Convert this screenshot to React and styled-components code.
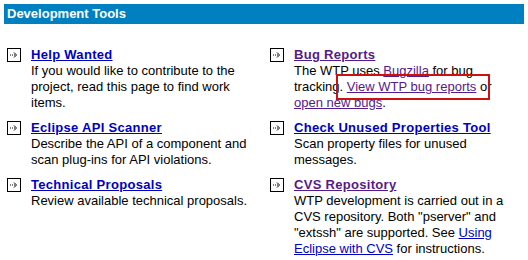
import React from "react";
import styled, { createGlobalStyle } from "styled-components";

const Global = createGlobalStyle`
  html, body { margin: 0; padding: 0; background: #ffffff; }
  body { font-family: "Liberation Sans", Arial, sans-serif; }
`;

const Page = styled.div`
  width: 528px;
  height: 260px;
  box-sizing: border-box;
  padding: 4px;
  background: #fff;
`;

const Header = styled.div`
  height: 20px;
  background: #0080c0;
  color: #fff;
  font-weight: bold;
  font-size: 13px;
  line-height: 20px;
  padding-left: 3px;
`;

const Grid = styled.div`
  display: grid;
  grid-template-columns: 263px 1fr;
  row-gap: 9px;
  margin-top: 23px;
  padding-left: 3px;
`;

const Item = styled.div`
  display: flex;
  align-items: flex-start;
  gap: 10px;
`;

const IconBox = styled.svg`
  flex: none;
  width: 14px;
  height: 14px;
  margin-top: 1px;
`;

const Body = styled.div`
  font-size: 13px;
  line-height: 16px;
  color: #000;
  white-space: nowrap;
`;

const Title = styled.a`
  display: inline-block;
  font-weight: bold;
  letter-spacing: 0.3px;
  color: ${(p) => (p.$visited ? "#551a8b" : "#0000c0")};
  text-decoration: underline;
`;

const Link = styled.a`
  color: ${(p) => (p.$visited ? "#551a8b" : "#0000c0")};
  text-decoration: underline;
`;

const Marked = styled.span`
  position: relative;
  &::after {
    content: "";
    position: absolute;
    left: -11px;
    right: -14px;
    top: -5px;
    bottom: -6px;
    border: 2px solid #cc1111;
    pointer-events: none;
  }
`;

const Arrow = () => (
  <IconBox viewBox="0 0 14 14">
    <rect x="0.5" y="0.5" width="13" height="13" fill="#fff" stroke="#000" />
    <path d="M3 7h1M5 7h1M7 7h1" stroke="#000" strokeWidth="1" />
    <path d="M7 4.5L9.5 7L7 9.5" fill="none" stroke="#000" strokeWidth="1" />
  </IconBox>
);

const Entry = ({ title, visited, children }) => (
  <Item>
    <Arrow />
    <Body>
      <Title href="#" $visited={visited}>{title}</Title>
      <br />
      {children}
    </Body>
  </Item>
);

export default function App() {
  return (
    <Page>
      <Global />
      <Header>Development Tools</Header>
      <Grid>
        <Entry title="Help Wanted">
          If you would like to contribute to the
          <br />
          project, read this page to find work
          <br />
          items.
        </Entry>
        <Entry title="Bug Reports" visited>
          The WTP uses <Link href="#" $visited>Bugzilla</Link> for bug
          <br />
          tracking. <Marked><Link href="#" $visited>View WTP bug reports</Link></Marked> or
          <br />
          <Link href="#" $visited>open new bugs</Link>.
        </Entry>
        <Entry title="Eclipse API Scanner">
          Describe the API of a component and
          <br />
          scan plug-ins for API violations.
        </Entry>
        <Entry title="Check Unused Properties Tool">
          Scan property files for unused
          <br />
          messages.
        </Entry>
        <Entry title="Technical Proposals">
          Review available technical proposals.
        </Entry>
        <Entry title="CVS Repository" visited>
          WTP development is carried out in a
          <br />
          CVS repository. Both "pserver" and
          <br />
          "extssh" are supported. See <Link href="#">Using</Link>
          <br />
          <Link href="#">Eclipse with CVS</Link> for instructions.
        </Entry>
      </Grid>
    </Page>
  );
}
